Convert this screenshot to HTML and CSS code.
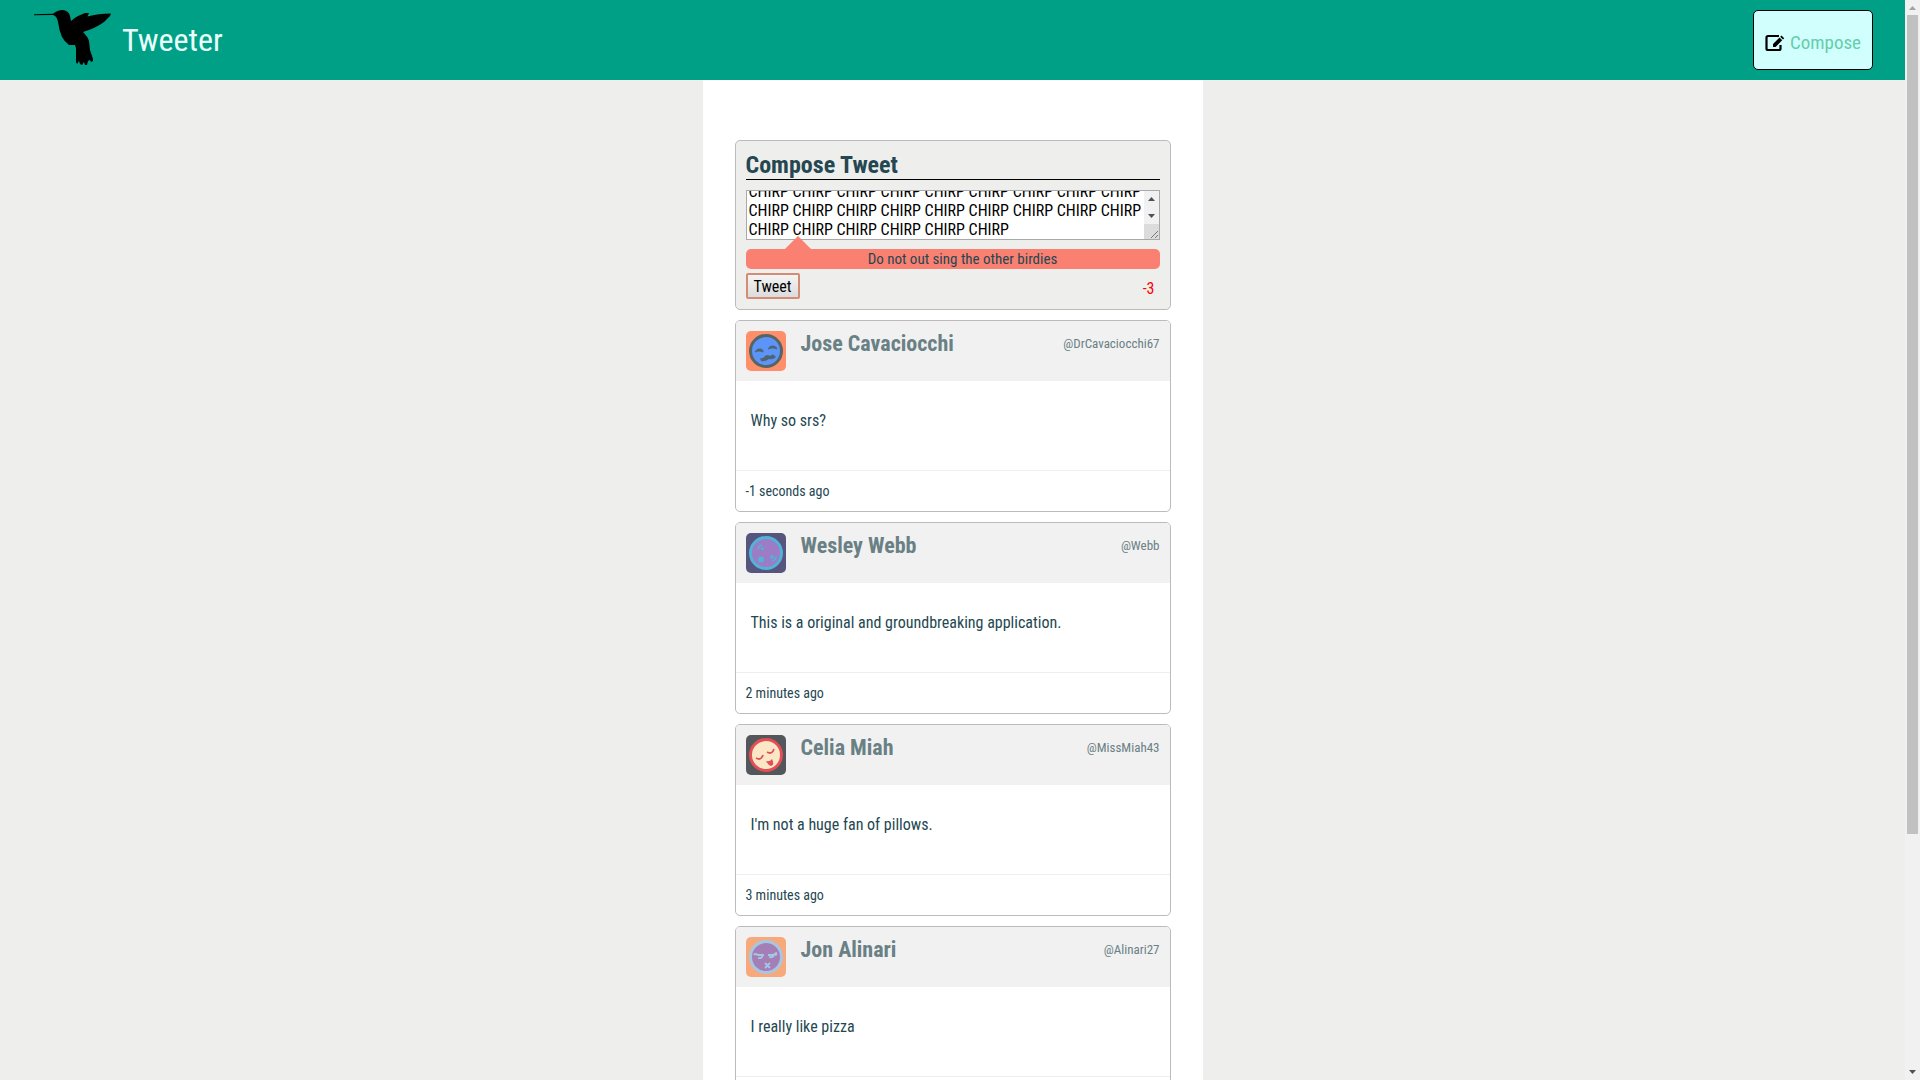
FILE: index.html
```html
<!DOCTYPE html>
<html lang="en">
<head>
<meta charset="utf-8">
<title>Tweeter</title>
<link rel="stylesheet" href="styles.css">
</head>
<body>
<div class="viewport">
  <div class="page">
    <header class="nav">
      <a class="brand" href="#">
        <svg class="bird" viewBox="0 0 78 56" aria-hidden="true"><path d="M0 4.200L19 3.800Q23 0 29 0Q35 1 36 6L37 11Q40 8 44 6L51 3L55 3L53.500 6.500Q64 3.500 77 3.500L76 6L70 12Q62 18 49 22Q54 27 55 31L56 40L59 49V51L57 52L56 50L54 51L53 55H51L50 52L48 55L46 54L45 51L43 54L42 52V38L41 35L35 35Q30 31 28 27Q25 20 24 12Q23 6 19 5L0 5.200Z"/></svg>
        <span class="brand-name">Tweeter</span>
      </a>
      <button class="compose-toggle" type="button">
        <svg class="pencil" viewBox="0 0 20 20" aria-hidden="true"><path d="M14 3H3Q1.500 3 1.500 4.500V15.500Q1.500 17 3 17H14Q15.500 17 15.500 15.500V12" fill="none" stroke="currentColor" stroke-width="2.200"/><path d="M8 14V11L14.500 4.500L17.200 7.200L10.500 14ZM15.200 3.800L16.500 2.600L19.200 5.300L18 6.500Z"/></svg>
        <span>Compose</span>
      </button>
    </header>
    <main class="container">
      <section class="new-tweet">
        <h2 class="new-tweet-title"><label for="tweet-text">Compose Tweet</label></h2>
        <form class="tweet-form">
          <div class="text-wrap">
            <textarea class="tweet-text" id="tweet-text">CHIRP CHIRP CHIRP CHIRP CHIRP CHIRP CHIRP CHIRP CHIRP CHIRP CHIRP CHIRP CHIRP CHIRP CHIRP CHIRP CHIRP CHIRP CHIRP CHIRP CHIRP CHIRP CHIRP CHIRP</textarea>
            <svg class="text-scroll" viewBox="0 0 15 48" aria-hidden="true"><path fill="#f1f1f1" d="M0 0h15v48H0z"/><path fill="#505050" d="M4 10l3.500-4L11 10zM4 23h7l-3.500 4z"/><path fill="#dcdcdc" d="M0 33h15v15H0z"/><path stroke="#777" d="M7 47l7-7M11 47l3-3"/></svg>
          </div>
          <p class="error">Do not out sing the other birdies</p>
          <div class="form-row">
            <button class="submit" type="submit">Tweet</button>
            <output class="counter" for="tweet-text">-3</output>
          </div>
        </form>
      </section>

      <article class="tweet">
        <header class="tweet-head">
          <svg class="avatar" viewBox="0 0 40 40" aria-hidden="true"><path fill="#ff8e6b" d="M0 0h40v40H0z"/><circle cx="20" cy="20" r="15.500" fill="#5c94fa" stroke="#556564" stroke-width="3"/><g fill="#4f6670"><path d="M9 21Q11 17 15 18Q18 19 17 21Q13 19 9 21ZM22 18Q24 14 28 15Q31 16 31 18Q27 16 22 18Z" stroke="#4f6670" stroke-width=".8"/><path d="M14 27Q17 28 19 25Q22 23 24 25Q27 22 29 25L30 26Q27 29 23 28Q19 31 15 30Z"/></g></svg>
          <h3 class="name">Jose Cavaciocchi</h3><span class="handle">@DrCavaciocchi67</span>
        </header>
        <p class="content">Why so srs?</p>
        <footer class="tweet-foot">-1 seconds ago</footer>
      </article>

      <article class="tweet">
        <header class="tweet-head">
          <svg class="avatar" viewBox="0 0 40 40" aria-hidden="true"><path fill="#57547e" d="M0 0h40v40H0z"/><circle cx="20" cy="20" r="15.500" fill="#9c7cc4" stroke="#52b2d8" stroke-width="3"/><g fill="#52b2d8"><circle cx="15" cy="26.500" r="3"/><circle cx="16.500" cy="15.500" r="1.500"/><circle cx="26" cy="24" r="2"/></g><path d="M12 17Q12 13 16 12M30 23Q30 27 26 28" fill="none" stroke="#52b2d8" stroke-width="1.500"/></svg>
          <h3 class="name">Wesley Webb</h3><span class="handle">@Webb</span>
        </header>
        <p class="content">This is a original and groundbreaking application.</p>
        <footer class="tweet-foot">2 minutes ago</footer>
      </article>

      <article class="tweet">
        <header class="tweet-head">
          <svg class="avatar" viewBox="0 0 40 40" aria-hidden="true"><path fill="#53565b" d="M0 0h40v40H0z"/><circle cx="20" cy="20" r="15.500" fill="#fbe6c5" stroke="#e34f55" stroke-width="3"/><path d="M10 23Q15 26 17 20M21 17Q26 20 28 14" fill="none" stroke="#e34f55" stroke-width="1.800"/><path d="M20 26Q24 27 26 24Q29 30 25 31Q22 30 20 26Z" fill="#e34f55"/></svg>
          <h3 class="name">Celia Miah</h3><span class="handle">@MissMiah43</span>
        </header>
        <p class="content">I'm not a huge fan of pillows.</p>
        <footer class="tweet-foot">3 minutes ago</footer>
      </article>

      <article class="tweet">
        <header class="tweet-head">
          <svg class="avatar" viewBox="0 0 40 40" aria-hidden="true"><path fill="#f8a97b" d="M0 0h40v40H0z"/><circle cx="20" cy="20" r="15.500" fill="#a47fb5" stroke="#a6c6e4" stroke-width="3"/><path d="M8 18Q9 16 12 18L17 18Q16 22 12 21M22 18H27L30 16Q31 18 29 18M23 20Q27 21 28 18M19 26L24 31M24 26L19 31" fill="none" stroke="#a6c6e4" stroke-width="1.800"/></svg>
          <h3 class="name">Jon Alinari</h3><span class="handle">@Alinari27</span>
        </header>
        <p class="content">I really like pizza</p>
        <footer class="tweet-foot"></footer>
      </article>
    </main>
  </div>
  <div class="scrollbar" aria-hidden="true">
    <svg class="arrow" viewBox="0 0 15 15"><path fill="#a3a3a3" d="M4 10l3.500-4L11 10z"/></svg>
    <div class="track"><div class="thumb"></div></div>
    <svg class="arrow" viewBox="0 0 15 15"><path fill="#505050" d="M4 5h7L7.500 9z"/></svg>
  </div>
</div>
<script src="app.js"></script>
</body>
</html>
```
FILE: styles.css
```css
* {
  box-sizing: border-box;
}

body {
  margin: 0;
  background: #eeeeec;
  color: #244751;
  font-family: "Roboto Condensed", Roboto, sans-serif;
  font-size: 16px;
  line-height: 19px;
}

h2, h3, p {
  margin: 0;
}

button, textarea {
  font: inherit;
}

.viewport {
  display: flex;
  height: 100vh;
  overflow: hidden;
}

.page {
  flex: 1;
  min-width: 0;
}

.nav {
  display: flex;
  align-items: center;
  justify-content: space-between;
  height: 80px;
  padding: 0 32px 0 34px;
  background: #00a087;
}

.brand {
  display: flex;
  align-items: center;
  gap: 10px;
  color: #e8fffa;
  text-decoration: none;
}

.bird {
  width: 78px;
  height: 56px;
  margin-bottom: 4px;
}

.brand-name {
  font-size: 32px;
  line-height: 38px;
}

.compose-toggle {
  display: flex;
  align-items: center;
  gap: 5px;
  height: 60px;
  padding: 5px 11px 0;
  border: 1px solid #000;
  border-radius: 5px;
  background: #d0fffe;
  color: #66cdaa;
  font-size: 19px;
}

.pencil {
  width: 20px;
  height: 20px;
  color: #000;
}

.container {
  display: flex;
  flex-direction: column;
  gap: 10px;
  width: 500px;
  max-width: 100%;
  min-height: 100vh;
  margin: 0 auto;
  padding: 60px 32px;
  background: #fff;
}

.new-tweet {
  padding: 10px;
  border: 1px solid #bbb;
  border-radius: 5px;
  background: #eeeeec;
}

.new-tweet-title {
  margin-bottom: 10px;
  border-bottom: 1px solid #000;
  font-size: 24px;
  line-height: 28px;
}

.text-wrap {
  position: relative;
  height: 50px;
}

.tweet-text {
  display: block;
  width: 100%;
  height: 50px;
  padding: 2px 16px 0 2px;
  border: 1px solid #a9a9a9;
  background: #fff;
  color: #000;
  resize: none;
  scrollbar-width: none;
}

.text-scroll {
  position: absolute;
  top: 1px;
  right: 1px;
  width: 15px;
  height: 48px;
}

.error {
  position: relative;
  margin-top: 9px;
  padding-left: 20px;
  border-radius: 5px;
  background: salmon;
  font-size: 15px;
  line-height: 20px;
  text-align: center;
}

.error::before {
  content: "";
  position: absolute;
  bottom: 100%;
  left: 39px;
  border: 13px solid transparent;
  border-top: 0;
  border-bottom-color: salmon;
}

.form-row {
  display: flex;
  align-items: flex-start;
  justify-content: space-between;
  height: 26px;
  margin-top: 4px;
  padding-right: 5px;
}

.submit {
  height: 26px;
  padding: 0 6px;
  border: 2px solid #d58c74;
  border-radius: 2px;
  background: linear-gradient(#f4f4f4, #dcdcdc);
  color: #000;
}

.counter {
  padding-top: 6px;
  color: red;
}

.tweet {
  overflow: hidden;
  flex-shrink: 0;
  border: 1px solid #bbb;
  border-radius: 5px;
}

.tweet-head {
  display: flex;
  align-items: flex-start;
  height: 60px;
  padding: 10px;
  background: #f1f1f1;
  color: #698085;
}

.avatar {
  width: 40px;
  height: 40px;
  margin-right: 15px;
  border-radius: 5px;
}

.name {
  flex: 1;
  font-size: 22px;
  line-height: 26px;
}

.handle {
  font-size: 13px;
  line-height: 26px;
}

.content {
  padding: 30px 15px 40px;
}

.tweet-foot {
  min-height: 41px;
  padding: 10px;
  border-top: 1px solid #eee;
  font-size: 14px;
  line-height: 20px;
}

.scrollbar {
  display: flex;
  flex-direction: column;
  width: 15px;
  background: #f1f1f1;
}

.arrow {
  width: 15px;
  height: 15px;
}

.track {
  flex: 1;
  padding: 0 2px;
}

.thumb {
  height: 78%;
  background: #c1c1c1;
}
```
FILE: app.js
```js
const box = document.getElementById("tweet-text");
box.scrollTop = box.scrollHeight;
```
